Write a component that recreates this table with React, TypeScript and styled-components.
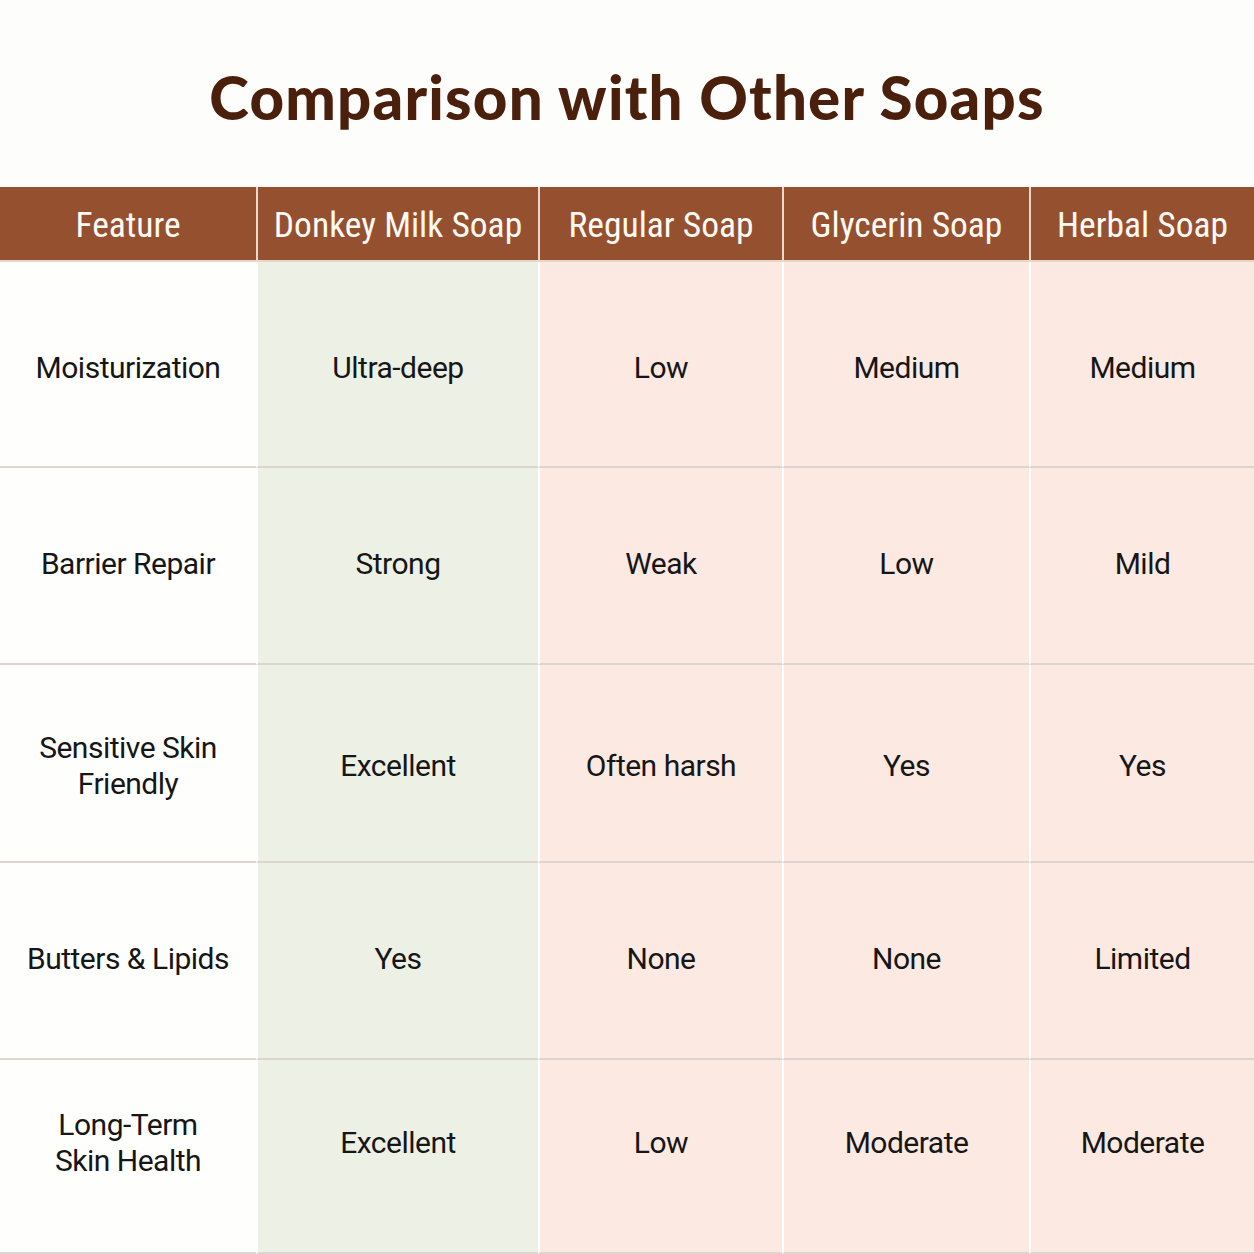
import React from "react";
import styled, { createGlobalStyle } from "styled-components";

const Global = createGlobalStyle`
  html, body { margin: 0; padding: 0; background: #fdfdfc; }
  body { font-family: Roboto, "Liberation Sans", sans-serif; }
`;

const Page = styled.div`
  width: 1254px;
  height: 1254px;
  overflow: hidden;
  display: flex;
  flex-direction: column;
  background: #fdfdfc;
`;

const TitleBar = styled.header`
  height: 187px;
  display: flex;
  align-items: center;
  justify-content: center;
`;

const Title = styled.h1`
  margin: 0;
  padding-top: 6px;
  font-family: Lato, "Open Sans", sans-serif;
  font-weight: 900;
  font-size: 60px;
  letter-spacing: 1.2px;
  color: #4a200d;
`;

const Table = styled.div`
  flex: 1;
  display: grid;
  grid-template-columns: 256px 282px 244px 247px 1fr;
  grid-template-rows: 75px 206px 197px 198px 197px 1fr;
`;

const HeadCell = styled.div<{ $first?: boolean }>`
  background: #95512f;
  display: flex;
  align-items: center;
  justify-content: center;
  padding-top: 3px;
  border-left: ${(p) => (p.$first ? "none" : "2px solid #ecd9cc")};
  border-bottom: 2px solid #e6d6ca;
  box-sizing: border-box;
`;

const HeadLabel = styled.span`
  display: inline-block;
  font-family: "Liberation Sans Narrow", "Roboto Condensed", Roboto, sans-serif;
  font-size: 35.5px;
  color: #fffaf5;
  white-space: nowrap;
`;

type Tone = "feature" | "best" | "other";

const toneBg: Record<Tone, string> = {
  feature: "#fefefd",
  best: "#edf0e5",
  other: "#fbe9e2",
};

const Cell = styled.div<{ $tone: Tone; $shift: number }>`
  background: ${(p) => toneBg[p.$tone]};
  border-left: ${(p) => (p.$tone === "feature" ? "none" : "2px solid #ffffff")};
  border-bottom: 2px solid #ddd6d0;
  box-sizing: border-box;
  display: flex;
  align-items: center;
  justify-content: center;
  text-align: center;
  padding-top: ${(p) => (p.$shift > 0 ? `${p.$shift}px` : "0")};
  padding-bottom: ${(p) => (p.$shift < 0 ? `${-p.$shift}px` : "0")};
`;

const CellText = styled.span`
  font-family: Roboto, "Liberation Sans", sans-serif;
  font-size: 30px;
  letter-spacing: -0.5px;
  line-height: 36px;
  color: #161616;
`;

const headers = ["Feature", "Donkey Milk Soap", "Regular Soap", "Glycerin Soap", "Herbal Soap"];

const rows: string[][] = [
  ["Moisturization", "Ultra-deep", "Low", "Medium", "Medium"],
  ["Barrier Repair", "Strong", "Weak", "Low", "Mild"],
  ["Sensitive Skin\nFriendly", "Excellent", "Often harsh", "Yes", "Yes"],
  ["Butters & Lipids", "Yes", "None", "None", "Limited"],
  ["Long-Term\nSkin Health", "Excellent", "Low", "Moderate", "Moderate"],
];

const rowShift = [8, -4, 6, -4, -26];

const toneFor = (i: number): Tone => (i === 0 ? "feature" : i === 1 ? "best" : "other");

export default function App() {
  return (
    <Page>
      <Global />
      <TitleBar>
        <Title>Comparison with Other Soaps</Title>
      </TitleBar>
      <Table>
        {headers.map((h, i) => (
          <HeadCell key={h} $first={i === 0}>
            <HeadLabel>{h}</HeadLabel>
          </HeadCell>
        ))}
        {rows.map((r, ri) =>
          r.map((c, ci) => (
            <Cell key={`${ri}-${ci}`} $tone={toneFor(ci)} $shift={rowShift[ri]}>
              <CellText>
                {c.split("\n").map((line, li) => (
                  <React.Fragment key={li}>
                    {li > 0 && <br />}
                    {line}
                  </React.Fragment>
                ))}
              </CellText>
            </Cell>
          ))
        )}
      </Table>
    </Page>
  );
}
